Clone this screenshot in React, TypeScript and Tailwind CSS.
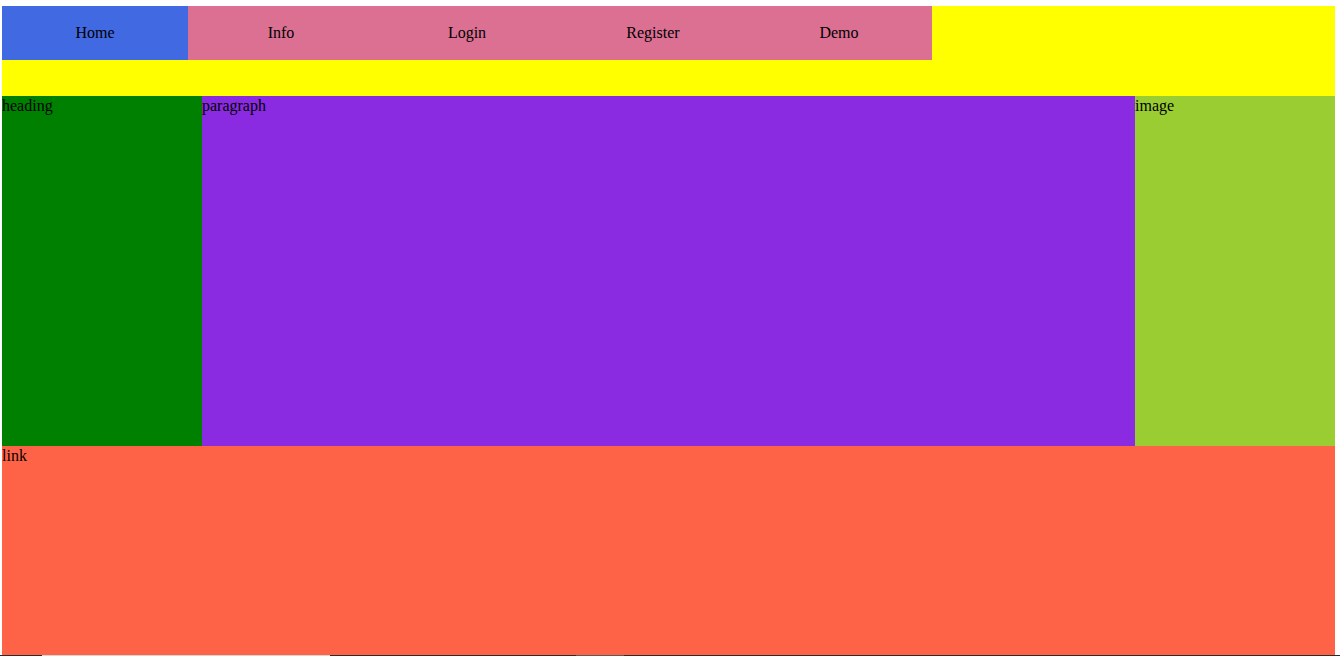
const navItems = ['Home', 'Info', 'Login', 'Register', 'Demo'];

export default function App() {
  return (
    <div className="min-h-[656px] bg-white font-['Liberation_Serif',serif] text-base text-black">
      <div className="ml-[2px] w-[1333px] pt-[6px]">
        <header className="h-[90px] bg-[#ffff00]">
          <nav className="flex h-[54px]">
            {navItems.map((item, i) => (
              <div
                key={item}
                className={
                  i === 0
                    ? 'flex w-[186px] items-center justify-center bg-[#4169e1]'
                    : 'flex w-[186px] items-center justify-center bg-[#db7093]'
                }
              >
                {item}
              </div>
            ))}
          </nav>
        </header>
        <main className="flex h-[350px] leading-[20px]">
          <section className="w-[200px] bg-[#008000]">heading</section>
          <section className="flex-1 bg-[#8a2be2]">paragraph</section>
          <section className="w-[200px] bg-[#9acd32]">image</section>
        </main>
        <footer className="h-[209px] bg-[#ff6347] leading-[20px]">link</footer>
      </div>
      <div className="flex h-px">
        <div className="w-[42px] bg-[#2b2b2b]" />
        <div className="w-[288px] bg-[#d4d4d4]" />
        <div className="w-[246px] bg-[#2b2b2b]" />
        <div className="w-[48px] bg-[#5a5a5a]" />
        <div className="flex-1 bg-[#2b2b2b]" />
      </div>
    </div>
  );
}
